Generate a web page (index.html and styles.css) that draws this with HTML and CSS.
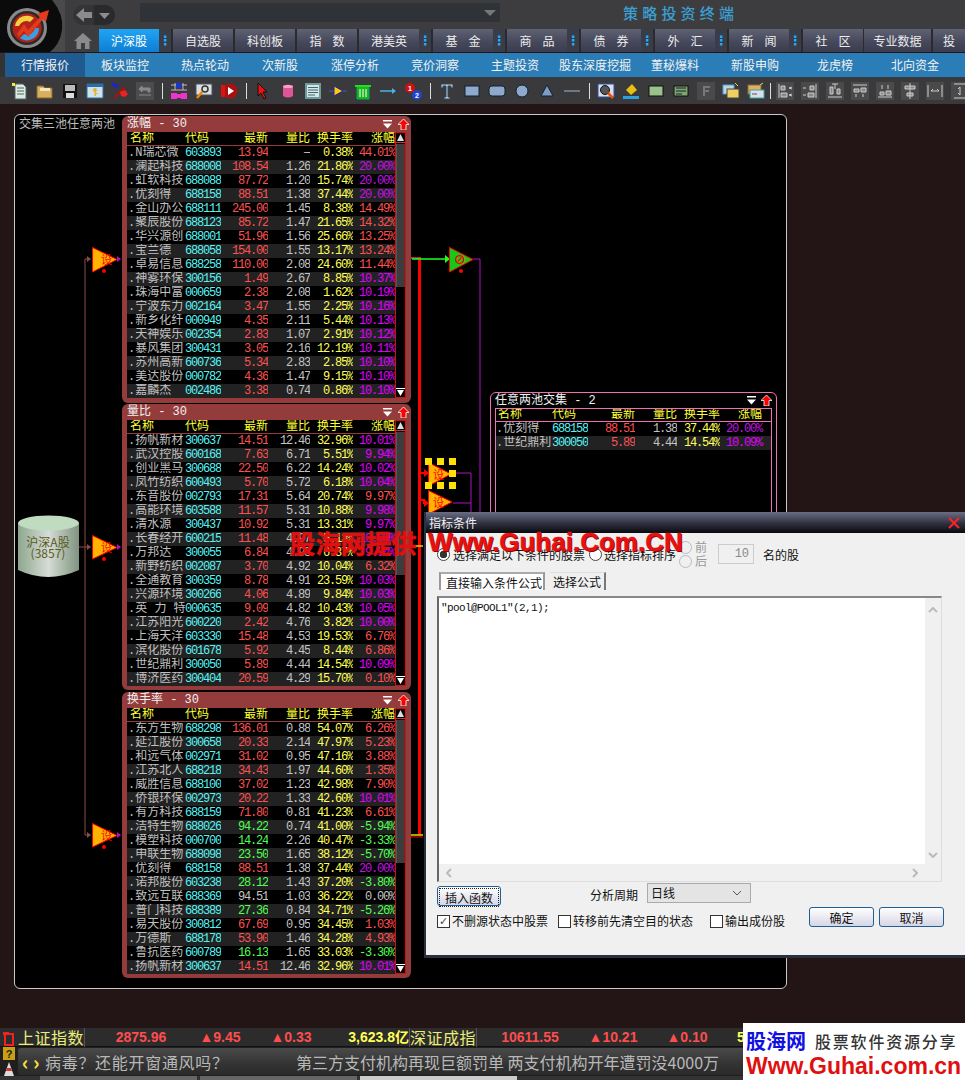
FILE: index.html
```html
<!DOCTYPE html>
<html lang="zh-CN">
<head>
<meta charset="utf-8">
<title>策略投资终端</title>
<link rel="stylesheet" href="styles.css">
</head>
<body>
<svg class="defs" width="0" height="0">
  <defs>
    <symbol id="arrowup" viewBox="0 0 11 11"><path d="M5.5 0 11 5.5H8V11H3V5.5H0Z" fill="#f00" stroke="#fff" stroke-width=".8"/></symbol>
    <symbol id="menu" viewBox="0 0 9 9"><path d="M0 0h9v1.5H0zM0 3.5h9L4.5 8.5z" fill="#fff"/></symbol>
    <symbol id="btnup" viewBox="0 0 9 10"><path d="M4.5 1 8 8H1z" fill="#ddd"/><path d="M0 9h9v1H0z" fill="#c33"/></symbol>
    <symbol id="btndn" viewBox="0 0 9 10"><path d="M0 1h9v1H0z" fill="#fff"/><path d="M1 3h7L4.5 9z" fill="#fff"/></symbol>
    <linearGradient id="cyl" x1="0" x2="1" y1="0" y2="0"><stop offset="0" stop-color="#8ea78f"/><stop offset=".5" stop-color="#d6dcd6"/><stop offset="1" stop-color="#7f937f"/></linearGradient>
  </defs>
</svg>

<header class="top">
  <svg class="logo" width="65" height="52" viewBox="0 0 65 52">
    <rect width="65" height="52" fill="#4a4a4c"/>
    <path d="M0 0H52Q64 14 62 30Q60 44 50 52H0Z" fill="#0b0b0b"/>
    <circle cx="27" cy="28" r="20" fill="#8a8a8a"/>
    <circle cx="27" cy="28" r="17" fill="#2a2a2a"/>
    <circle cx="27" cy="28" r="14.5" fill="#b52218"/>
    <path d="M15 26A12 12 0 0 1 34 18L30 22A8 8 0 0 0 19 26Z" fill="#f2d040"/>
    <path d="M39 28A12 12 0 0 1 20 38L24 34A8 8 0 0 0 35 28Z" fill="#3a9fe0"/>
    <path d="M17 34 24 24 28 30 40 17 37 14 49 10 46 22 43 19 28 37 24 31 19 37Z" fill="#e23a1c"/>
  </svg>
  <div class="top-right">
    <div class="top-row">
      <div class="backpill">
        <svg width="21" height="20" viewBox="0 0 21 20"><path d="M3 10 11 3V7H19V13H11V17Z" fill="#8c8c8c"/></svg>
        <svg class="pill-dn" width="21" height="20" viewBox="0 0 21 20"><path d="M5 8H16L10.500 14Z" fill="#8c8c8c"/></svg>
      </div>
      <div class="addr"><svg width="12" height="8" viewBox="0 0 12 8"><path d="M0 1H12L6 7Z" fill="#777"/></svg></div>
      <div class="apptitle">策略投资终端</div>
    </div>
    <nav class="tabs">
      <div class="home"><svg width="20" height="18" viewBox="0 0 20 18"><path d="M10 1 19 9H16.500V17H12V11H8V17H3.500V9H1Z" fill="#8a8a8a"/></svg></div>
      <div class="tab wide active"><span>沪深股</span><i>⋮</i></div>
      <div class="tab"><span>自选股</span></div>
      <div class="tab"><span>科创板</span></div>
      <div class="tab"><span class="sp">指数</span></div>
      <div class="tab wide"><span>港美英</span><i>⋮</i></div>
      <div class="tab wide"><span class="sp">基金</span><i>⋮</i></div>
      <div class="tab wide"><span class="sp">商品</span><i>⋮</i></div>
      <div class="tab wide"><span class="sp">债券</span><i>⋮</i></div>
      <div class="tab wide"><span class="sp">外汇</span><i>⋮</i></div>
      <div class="tab wide"><span class="sp">新闻</span><i>⋮</i></div>
      <div class="tab"><span class="sp">社区</span></div>
      <div class="tab pro"><span>专业数据</span></div>
      <div class="tab cut"><span>投</span></div>
    </nav>
  </div>
</header>

<nav class="subnav">
  <div class="sub on">行情报价</div><div class="sub">板块监控</div><div class="sub">热点轮动</div><div class="sub">次新股</div>
  <div class="sub">涨停分析</div><div class="sub">竞价洞察</div><div class="sub">主题投资</div><div class="sub">股东深度挖掘</div>
  <div class="sub">董秘爆料</div><div class="sub">新股申购</div><div class="sub">龙虎榜</div><div class="sub">北向资金</div>
</nav>

<div class="toolbar">
  <svg viewBox="0 0 18 18"><path d="M4 2h8l3 3v12H4z" fill="#dfe9e4" stroke="#4a6a5a"/><path d="M6 6h7M6 9h7M6 12h7" stroke="#4a6a5a"/><path d="M1 1h3v3H1z" fill="#ee3"/></svg>
  <svg viewBox="0 0 18 18"><path d="M1 4h6l2 2h7v10H1z" fill="#d9ae5c" stroke="#86662a"/><path d="M4 6h10v3H4z" fill="#efe6c8"/></svg>
  <svg viewBox="0 0 18 18"><path d="M2 2h14v14H2z" fill="#111"/><path d="M4 3h10v6H4z" fill="#bbb"/><path d="M5 11h8v5H5z" fill="#ddd"/></svg>
  <svg viewBox="0 0 18 18"><path d="M1 2h16v14H1z" fill="#cfe2ee" stroke="#2a6fa5"/><path d="M1 2h16v3H1z" fill="#2a6fa5"/><circle cx="9" cy="8" r="2" fill="#e3b530"/><path d="M8.500 9h1.500v5H8.500zM10 11h2v1h-2z" fill="#e3b530"/></svg>
  <svg viewBox="0 0 18 18"><path d="M1 3h6M1 1l5 5" stroke="#22c" stroke-width="2"/><path d="M3 16 14 5" stroke="#a11" stroke-width="2"/><path d="M9 10l5-2 3 4-3 3-4-1z" fill="#e22"/></svg>
  <svg viewBox="0 0 18 18"><rect width="18" height="18" fill="#4c4c4c"/><path d="M3 7 6 4V6H14V10H12V8H6V10ZM3 13H15" stroke="#888" fill="#888"/></svg>
  <b class="sep"></b>
  <svg viewBox="0 0 18 18"><path d="M1 3h16M1 8h16M5 1v7M13 1v7" stroke="#bbb"/><path d="M6 1h6v5H6z" fill="#23c"/><path d="M1 11h6v6H1zM11 11h6v6h-6z" fill="#e3c"/><path d="M7 12h4v4H7z" fill="#e3c"/></svg>
  <svg viewBox="0 0 18 18"><path d="M1 2h16v11H1z" fill="#ddd" stroke="#456"/><circle cx="10" cy="7" r="3" fill="none" stroke="#333" stroke-width="1.500"/><path d="M7.500 9.500 2 16" stroke="#e80" stroke-width="2.500"/></svg>
  <svg viewBox="0 0 18 18"><circle cx="10" cy="9" r="7.500" fill="#a11"/><path d="M8 5v8l6-4z" fill="#fff"/><path d="M1 3h4v12H1z" fill="#d11"/></svg>
  <b class="sep"></b>
  <svg viewBox="0 0 18 18"><path d="M4 1v13l3-3 3 6 2-1-3-6h4z" fill="#e11" stroke="#111"/></svg>
  <svg viewBox="0 0 18 18"><path d="M4 4q5-3 10 0v10q-5 3-10 0z" fill="#e0559a"/><ellipse cx="9" cy="4.500" rx="5" ry="1.500" fill="#f5a5cc"/></svg>
  <svg viewBox="0 0 18 18"><rect x="2" y="2" width="14" height="14" fill="#d6e6e6" stroke="#6a9a9a" stroke-width="2"/><path d="M4 5.500h10M4 8h10M4 10.500h10M4 13h7" stroke="#467"/></svg>
  <svg viewBox="0 0 18 18"><path d="M0 9h18" stroke="#45c"/><path d="M5 4 14 9 5 14z" fill="#fc0" stroke="#22a"/></svg>
  <svg viewBox="0 0 18 18"><path d="M3 4h12v13H3z" fill="#1ab61a" stroke="#0a5"/><path d="M1 3h16v2H1z" fill="#2d2"/><path d="M6 7v8M9 7v8M12 7v8" stroke="#fff"/></svg>
  <svg viewBox="0 0 18 18"><path d="M1 9h13" stroke="#4ab0e6" stroke-width="1.500"/><path d="M13 6l4 3-4 3z" fill="#4ab0e6"/></svg>
  <svg viewBox="0 0 18 18"><circle cx="6" cy="6" r="5" fill="#c11"/><circle cx="13" cy="13" r="5" fill="#24c"/><text x="6" y="9" class="tiny">1</text><text x="13" y="16" class="tiny">2</text></svg>
  <b class="sep"></b>
  <svg viewBox="0 0 18 18"><path d="M3 2h12v4h-2V4h-3v11h2v2H6v-2h2V4H5v2H3z" fill="#b7cfe6" stroke="#345"/></svg>
  <svg viewBox="0 0 18 18"><rect x="2" y="4" width="14" height="10" fill="#8fa9cc" stroke="#123"/></svg>
  <svg viewBox="0 0 18 18"><rect x="1" y="4" width="16" height="10" rx="3" fill="#8fa9cc" stroke="#123"/></svg>
  <svg viewBox="0 0 18 18"><circle cx="9" cy="9" r="6" fill="#8fa9cc" stroke="#123"/></svg>
  <svg viewBox="0 0 18 18"><path d="M9 3 15 14H3Z" fill="#7f9cc4" stroke="#123"/></svg>
  <svg viewBox="0 0 18 18"><path d="M1 9h16" stroke="#9bb7d4"/></svg>
  <b class="sep"></b>
  <svg viewBox="0 0 18 18"><path d="M1 2h16v13H1z" fill="#dde" stroke="#25a"/><circle cx="8" cy="8" r="4.500" fill="#555" stroke="#111"/><path d="M11 11l5 5" stroke="#e50" stroke-width="2.500"/></svg>
  <svg viewBox="0 0 18 18"><path d="M4 8 10 2l5 6-6 5z" fill="#e8c010"/><path d="M1 14h16v3H1z" fill="#2ea0e0"/></svg>
  <svg viewBox="0 0 18 18"><rect x="2" y="4" width="14" height="10" fill="#9ac28a" stroke="#111"/></svg>
  <svg viewBox="0 0 18 18"><rect x="2" y="4" width="14" height="10" fill="#7fa56f" stroke="#111"/><path d="M4 6h10M4 9h10M4 12h6" stroke="#123"/></svg>
  <svg viewBox="0 0 18 18"><rect width="18" height="18" fill="#4a4a4a"/><path d="M6 4h7v2H8v2h4v2H8v4H6z" fill="#777"/></svg>
  <svg viewBox="0 0 18 18"><rect x="1" y="3" width="11" height="9" fill="#bcd6e6" stroke="#59c"/><rect x="5" y="7" width="12" height="9" fill="#f0d060" stroke="#444"/><path d="M13 1l3 3" stroke="#fc3"/></svg>
  <svg viewBox="0 0 18 18"><rect x="1" y="3" width="13" height="9" fill="#e0b060" stroke="#864"/><rect x="3" y="8" width="14" height="8" fill="#dde" stroke="#3a9"/><path d="M13 3l3-2" stroke="#fc3"/><path d="M5 12h5" stroke="#555"/></svg>
  <b class="sep sep2"></b>
  <svg viewBox="0 0 18 18"><rect width="18" height="18" fill="#4a4a4a"/><path d="M3 2v14M5 4h4v4H5zM5 11h6v4H5zM13 6l3-1M13 6l3 1M13 13l3-1M13 13l3 1" stroke="#ccc" fill="#888"/></svg>
  <svg viewBox="0 0 18 18"><rect width="18" height="18" fill="#4a4a4a"/><path d="M15 2v14M9 4h4v4H9zM7 11h6v4H7zM2 6h3M2 13h3" stroke="#ccc" fill="#888"/></svg>
  <svg viewBox="0 0 18 18"><rect width="18" height="18" fill="#4a4a4a"/><path d="M2 15h14M4 5h3v7H4zM11 7h3v5h-3zM9 2v5M6 2h6" stroke="#ccc" fill="#888"/></svg>
  <svg viewBox="0 0 18 18"><rect width="18" height="18" fill="#4a4a4a"/><path d="M2 3h14M3 7h5v3H3zM10 6h5v4h-5zM5 12v3M12 12v3" stroke="#ccc" fill="#888"/></svg>
  <svg viewBox="0 0 18 18"><rect width="18" height="18" fill="#4a4a4a"/><path d="M2 15h14M4 10h4v3H4zM10 9h5v4h-5zM6 3v4M12 3v4" stroke="#ccc" fill="#888"/></svg>
  <svg viewBox="0 0 18 18"><rect width="18" height="18" fill="#4a4a4a"/><path d="M9 1v16M4 4h10v3H4zM6 11h6v3H6z" stroke="#ccc" fill="#888"/></svg>
  <svg viewBox="0 0 18 18"><rect width="18" height="18" fill="#4a4a4a"/><path d="M2 3v12M16 3v12M5 9h8M5 9l2-2M13 9l-2-2" stroke="#ccc"/></svg>
  <svg viewBox="0 0 18 18"><rect width="18" height="18" fill="#4a4a4a"/><path d="M3 2h12M3 16h12M9 5v8M9 5 7 7M9 13l-2-2" stroke="#ccc"/></svg>
</div>

<main class="main">
  <section class="canvas">
    <div class="canvas-title">交集三池任意两池</div>

    <svg class="wires" width="771" height="873" viewBox="15 115 771 873">
      <path d="M79 547H90M85 259V835M85 259H90M85 835H90" stroke="#8a4a4a" fill="none"/>
      <path d="M87 256l4 3-4 3zM87 544l4 3-4 3zM87 832l4 3-4 3z" fill="#8a4a4a"/>
      <path d="M117 256l4 3-4 3zM117 544l4 3-4 3zM117 832l4 3-4 3z" fill="#b010c0"/>
      <path d="M473 259H480V512M452 473H471V512M453 503H471" stroke="#b010c0" fill="none"/>
      <path d="M419.500 259V835" stroke="#f00" stroke-width="3"/>
      <path d="M411 258H421" stroke="#a33" stroke-width="2"/>
      <path d="M419 473H425M419 500H424V503H428" stroke="#f00" stroke-width="2" fill="none"/>
      <path d="M424 469l5 4-5 4zM424 499l5 4-5 4z" fill="#f00"/>
      <path d="M412 259H446" stroke="#2f2" stroke-width="1.500"/>
      <path d="M445 255l5 4-5 4z" fill="#2f2"/>
      <path d="M411 546H423M411 835H423" stroke="#d8e000" stroke-width="1.500"/>
      <path d="M411 837H423" stroke="#f00"/>

      <g class="node"><path d="M92.500 247.500 117 259.500 92.500 272Z"/><text x="101" y="264">设</text><circle cx="104" cy="271" r="2"/></g>
      <g class="node"><path d="M92.500 535.500 117 547.500 92.500 559Z"/><text x="101" y="552">设</text><circle cx="104" cy="559" r="2"/></g>
      <g class="node"><path d="M92.500 823.500 117 835.500 92.500 847Z"/><text x="101" y="840">设</text><circle cx="104" cy="847" r="2"/></g>
      <g class="node nodeg"><path d="M449.500 247.500 473 259.500 449.500 272Z"/><text x="454" y="264">⊘</text><circle cx="461" cy="271" r="2"/></g>
      <g class="node"><path d="M428.500 462.500 451 474 428.500 486Z"/><text x="433" y="479">设</text></g>
      <g class="node"><path d="M428.500 490.500 452 502 428.500 514Z"/><text x="433" y="507">设</text></g>
      <path fill="#ffe000" d="M425 458h7v7h-7zM437 458h7v7h-7zM449 458h7v7h-7zM449 470h7v7h-7zM425 482h7v7h-7zM437 482h7v7h-7zM449 482h7v7h-7z"/>

      <path d="M18 523V570Q48 584 79 570V523Z" fill="url(#cyl)"/>
      <ellipse cx="48.500" cy="523" rx="30.500" ry="7.500" fill="#c0dcc0"/>
      <text class="cyl-t" x="48" y="547">沪深A股</text>
      <text class="cyl-t" x="48" y="558">(3857)</text>
    </svg>

    <article class="panel p1">
      <div class="ptitle"><span>涨幅 - 30</span><svg class="ic"><use href="#menu"/></svg><svg class="ic2"><use href="#arrowup"/></svg></div>
      <div class="pbody">
        <table class="grid">
          <thead><tr><th>名称</th><th>代码</th><th>最新</th><th>量比</th><th>换手率</th><th>涨幅</th></tr></thead>
          <tbody>
            <tr><td>.N瑞芯微</td><td>603893</td><td class="u">13.94</td><td>—</td><td>0.38%</td><td class="u">44.01%</td></tr>
            <tr><td>.澜起科技</td><td>688008</td><td class="u">108.54</td><td>1.26</td><td>21.86%</td><td class="p">20.00%</td></tr>
            <tr><td>.虹软科技</td><td>688088</td><td class="u">87.72</td><td>1.20</td><td>15.74%</td><td class="p">20.00%</td></tr>
            <tr><td>.优刻得</td><td>688158</td><td class="u">88.51</td><td>1.38</td><td>37.44%</td><td class="p">20.00%</td></tr>
            <tr><td>.金山办公</td><td>688111</td><td class="u">245.00</td><td>1.45</td><td>8.38%</td><td class="u">14.49%</td></tr>
            <tr><td>.聚辰股份</td><td>688123</td><td class="u">85.72</td><td>1.47</td><td>21.65%</td><td class="u">14.32%</td></tr>
            <tr><td>.华兴源创</td><td>688001</td><td class="u">51.96</td><td>1.56</td><td>25.66%</td><td class="u">13.25%</td></tr>
            <tr><td>.宝兰德</td><td>688058</td><td class="u">154.00</td><td>1.55</td><td>13.17%</td><td class="u">13.24%</td></tr>
            <tr><td>.卓易信息</td><td>688258</td><td class="u">110.00</td><td>2.08</td><td>24.60%</td><td class="u">11.44%</td></tr>
            <tr><td>.神雾环保</td><td>300156</td><td class="u">1.49</td><td>2.67</td><td>8.85%</td><td class="m">10.37%</td></tr>
            <tr><td>.珠海中富</td><td>000659</td><td class="u">2.38</td><td>2.08</td><td>1.62%</td><td class="m">10.19%</td></tr>
            <tr><td>.宁波东力</td><td>002164</td><td class="u">3.47</td><td>1.55</td><td>2.25%</td><td class="m">10.16%</td></tr>
            <tr><td>.新乡化纤</td><td>000949</td><td class="u">4.35</td><td>2.11</td><td>5.44%</td><td class="m">10.13%</td></tr>
            <tr><td>.天神娱乐</td><td>002354</td><td class="u">2.83</td><td>1.07</td><td>2.91%</td><td class="m">10.12%</td></tr>
            <tr><td>.暴风集团</td><td>300431</td><td class="u">3.05</td><td>2.16</td><td>12.19%</td><td class="m">10.11%</td></tr>
            <tr><td>.苏州高新</td><td>600736</td><td class="u">5.34</td><td>2.83</td><td>2.85%</td><td class="m">10.10%</td></tr>
            <tr><td>.美达股份</td><td>000782</td><td class="u">4.36</td><td>1.47</td><td>9.15%</td><td class="m">10.10%</td></tr>
            <tr><td>.嘉麟杰</td><td>002486</td><td class="u">3.38</td><td>0.74</td><td>0.86%</td><td class="m">10.10%</td></tr>
          </tbody>
        </table>
        <div class="sb"><svg class="sbb"><use href="#btnup"/></svg><div class="thumb"></div><svg class="sbb"><use href="#btndn"/></svg></div>
      </div>
    </article>

    <article class="panel p2">
      <div class="ptitle"><span>量比 - 30</span><svg class="ic"><use href="#menu"/></svg><svg class="ic2"><use href="#arrowup"/></svg></div>
      <div class="pbody">
        <table class="grid">
          <thead><tr><th>名称</th><th>代码</th><th>最新</th><th>量比</th><th>换手率</th><th>涨幅</th></tr></thead>
          <tbody>
            <tr><td>.扬帆新材</td><td>300637</td><td class="u">14.51</td><td>12.46</td><td>32.96%</td><td class="m">10.01%</td></tr>
            <tr><td>.武汉控股</td><td>600168</td><td class="u">7.63</td><td>6.71</td><td>5.51%</td><td class="m">9.94%</td></tr>
            <tr><td>.创业黑马</td><td>300688</td><td class="u">22.50</td><td>6.22</td><td>14.24%</td><td class="m">10.02%</td></tr>
            <tr><td>.凤竹纺织</td><td>600493</td><td class="u">5.70</td><td>5.72</td><td>6.18%</td><td class="m">10.04%</td></tr>
            <tr><td>.东音股份</td><td>002793</td><td class="u">17.31</td><td>5.64</td><td>20.74%</td><td class="u">9.97%</td></tr>
            <tr><td>.高能环境</td><td>603588</td><td class="u">11.57</td><td>5.31</td><td>10.88%</td><td class="m">9.98%</td></tr>
            <tr><td>.清水源</td><td>300437</td><td class="u">10.92</td><td>5.31</td><td>13.31%</td><td class="m">9.97%</td></tr>
            <tr><td>.长春经开</td><td>600215</td><td class="u">11.48</td><td>4.97</td><td>5.13%</td><td class="m">10.00%</td></tr>
            <tr><td>.万邦达</td><td>300055</td><td class="u">6.84</td><td>4.93</td><td>6.37%</td><td class="m">9.94%</td></tr>
            <tr><td>.新野纺织</td><td>002087</td><td class="u">3.70</td><td>4.92</td><td>10.04%</td><td class="u">6.32%</td></tr>
            <tr><td>.全通教育</td><td>300359</td><td class="u">8.78</td><td>4.91</td><td>23.59%</td><td class="m">10.03%</td></tr>
            <tr><td>.兴源环境</td><td>300266</td><td class="u">4.06</td><td>4.89</td><td>9.84%</td><td class="m">10.03%</td></tr>
            <tr><td>.英 力 特</td><td>000635</td><td class="u">9.09</td><td>4.82</td><td>10.43%</td><td class="m">10.05%</td></tr>
            <tr><td>.江苏阳光</td><td>600220</td><td class="u">2.42</td><td>4.76</td><td>3.82%</td><td class="m">10.00%</td></tr>
            <tr><td>.上海天洋</td><td>603330</td><td class="u">15.48</td><td>4.53</td><td>19.53%</td><td class="u">6.76%</td></tr>
            <tr><td>.滨化股份</td><td>601678</td><td class="u">5.92</td><td>4.45</td><td>8.44%</td><td class="u">6.86%</td></tr>
            <tr><td>.世纪鼎利</td><td>300050</td><td class="u">5.89</td><td>4.44</td><td>14.54%</td><td class="m">10.09%</td></tr>
            <tr><td>.博济医药</td><td>300404</td><td class="u">20.59</td><td>4.29</td><td>15.70%</td><td class="u">0.10%</td></tr>
          </tbody>
        </table>
        <div class="sb"><svg class="sbb"><use href="#btnup"/></svg><div class="thumb"></div><svg class="sbb"><use href="#btndn"/></svg></div>
      </div>
    </article>

    <article class="panel p3">
      <div class="ptitle"><span>换手率 - 30</span><svg class="ic"><use href="#menu"/></svg><svg class="ic2"><use href="#arrowup"/></svg></div>
      <div class="pbody">
        <table class="grid">
          <thead><tr><th>名称</th><th>代码</th><th>最新</th><th>量比</th><th>换手率</th><th>涨幅</th></tr></thead>
          <tbody>
            <tr><td>.东方生物</td><td>688298</td><td class="u">136.01</td><td>0.88</td><td>54.07%</td><td class="u">6.26%</td></tr>
            <tr><td>.延江股份</td><td>300658</td><td class="u">20.33</td><td>2.14</td><td>47.97%</td><td class="u">5.23%</td></tr>
            <tr><td>.和远气体</td><td>002971</td><td class="u">31.02</td><td>0.95</td><td>47.16%</td><td class="u">3.88%</td></tr>
            <tr><td>.江苏北人</td><td>688218</td><td class="u">34.43</td><td>1.97</td><td>44.60%</td><td class="u">1.35%</td></tr>
            <tr><td>.威胜信息</td><td>688100</td><td class="u">37.02</td><td>1.23</td><td>42.98%</td><td class="u">7.90%</td></tr>
            <tr><td>.侨银环保</td><td>002973</td><td class="u">20.22</td><td>1.33</td><td>42.60%</td><td class="m">10.01%</td></tr>
            <tr><td>.有方科技</td><td>688159</td><td class="u">71.80</td><td>0.81</td><td>41.23%</td><td class="u">6.61%</td></tr>
            <tr><td>.洁特生物</td><td>688026</td><td class="d">94.22</td><td>0.74</td><td>41.00%</td><td class="d">-5.94%</td></tr>
            <tr><td>.模塑科技</td><td>000700</td><td class="d">14.24</td><td>2.26</td><td>40.47%</td><td class="d">-3.33%</td></tr>
            <tr><td>.申联生物</td><td>688098</td><td class="d">23.50</td><td>1.65</td><td>38.12%</td><td class="d">-5.70%</td></tr>
            <tr><td>.优刻得</td><td>688158</td><td class="u">88.51</td><td>1.38</td><td>37.44%</td><td class="p">20.00%</td></tr>
            <tr><td>.诺邦股份</td><td>603238</td><td class="d">28.12</td><td>1.43</td><td>37.20%</td><td class="d">-3.80%</td></tr>
            <tr><td>.致远互联</td><td>688369</td><td class="n">94.51</td><td>1.03</td><td>36.22%</td><td class="n">0.00%</td></tr>
            <tr><td>.普门科技</td><td>688389</td><td class="d">27.36</td><td>0.84</td><td>34.71%</td><td class="d">-5.26%</td></tr>
            <tr><td>.易天股份</td><td>300812</td><td class="u">67.69</td><td>0.95</td><td>34.45%</td><td class="u">1.03%</td></tr>
            <tr><td>.万德斯</td><td>688178</td><td class="u">53.90</td><td>1.46</td><td>34.28%</td><td class="u">4.93%</td></tr>
            <tr><td>.鲁抗医药</td><td>600789</td><td class="d">16.13</td><td>1.65</td><td>33.03%</td><td class="d">-3.30%</td></tr>
            <tr><td>.扬帆新材</td><td>300637</td><td class="u">14.51</td><td>12.46</td><td>32.96%</td><td class="m">10.01%</td></tr>
          </tbody>
        </table>
        <div class="sb"><svg class="sbb"><use href="#btnup"/></svg><div class="thumb"></div><svg class="sbb"><use href="#btndn"/></svg></div>
      </div>
    </article>

    <article class="panel p4">
      <div class="ptitle"><span>任意两池交集 - 2</span><svg class="ic"><use href="#menu"/></svg><svg class="ic2"><use href="#arrowup"/></svg></div>
      <div class="pbody4">
        <table class="grid grid4">
          <thead><tr><th>名称</th><th>代码</th><th>最新</th><th>量比</th><th>换手率</th><th>涨幅</th></tr></thead>
          <tbody>
            <tr><td>.优刻得</td><td>688158</td><td class="u">88.51</td><td>1.38</td><td>37.44%</td><td class="p">20.00%</td></tr>
            <tr><td>.世纪鼎利</td><td>300050</td><td class="u">5.89</td><td>4.44</td><td>14.54%</td><td class="m">10.09%</td></tr>
          </tbody>
        </table>
      </div>
    </article>
  </section>
</main>

<footer class="bottom">
  <div class="status">
    <div class="side"><svg width="14" height="16" viewBox="0 0 14 16"><path d="M3 4h8v11H3z" fill="none" stroke="#e22" stroke-width="2"/><path d="M1 2h6v3H1z" fill="#e22"/></svg></div>
    <div class="idx">上证指数</div><div class="v u2">2875.96</div><div class="v u2">▲9.45</div><div class="v u2">▲0.33</div><div class="v y2">3,623.8亿</div>
    <div class="idx idx2">深证成指</div><div class="v u2">10611.55</div><div class="v u2">▲10.21</div><div class="v u2">▲0.10</div><div class="v y2 last">5</div>
  </div>
  <div class="ticker">
    <div class="side side2">
      <svg width="12" height="13" viewBox="0 0 12 13"><rect width="12" height="13" fill="#c9a010"/><text x="6" y="11" class="q">?</text></svg>
      <svg width="12" height="14" viewBox="0 0 12 14"><path d="M6 0 11 14H1Z" fill="#ddd"/><path d="M4 6h4l1 3H3z" fill="#c33"/></svg>
    </div>
    <div class="marquee"><i class="angle">‹ ›</i><span class="news1">病毒？还能开窗通风吗？</span><span class="news2">第三方支付机构再现巨额罚单 两支付机构开年遭罚没4000万</span></div>
  </div>
  <div class="taskstrip"><i></i><i></i><i class="lit"></i></div>
</footer>

<aside class="wm1">股海网提供</aside>

<section class="dialog">
  <div class="dtitle"><span>指标条件</span><svg width="12" height="12" viewBox="0 0 12 12"><path d="M1 1 11 11M11 1 1 11" stroke="#f22" stroke-width="2"/></svg></div>
  <div class="dbody">
    <div class="radios">
      <label class="radio on"></label><span class="t1">选择满足以下条件的股票</span>
      <label class="radio"></label><span class="t2">选择指标排序</span>
      <div class="radiostack"><label class="radio off"></label><label class="radio off"></label></div>
      <div class="qianhou"><span>前</span><span>后</span></div>
      <div class="numbox">10</div>
      <span>名的股</span>
    </div>
    <div class="dtabs"><div class="dtab cur">直接输入条件公式</div><div class="dtab">选择公式</div></div>
    <div class="editor">
      <div class="edrow">
        <div class="edtext">"pool@POOL1"(2,1);</div>
        <div class="vbar"><svg width="10" height="6" viewBox="0 0 10 6"><path d="M1 5 5 1 9 5" fill="none" stroke="#bbb" stroke-width="2"/></svg><svg width="10" height="6" viewBox="0 0 10 6"><path d="M1 1 5 5 9 1" fill="none" stroke="#bbb" stroke-width="2"/></svg></div>
      </div>
      <div class="hbar"><svg width="6" height="10" viewBox="0 0 6 10"><path d="M5 1 1 5 5 9" fill="none" stroke="#bbb" stroke-width="2"/></svg><svg width="6" height="10" viewBox="0 0 6 10"><path d="M1 1 5 5 1 9" fill="none" stroke="#bbb" stroke-width="2"/></svg></div>
    </div>
    <div class="actions">
      <div class="col-l">
        <div class="row-fn">
          <button class="btn fn" type="button"><span>插入函数</span></button>
          <span class="period">分析周期</span>
          <div class="select">日线<svg width="10" height="6" viewBox="0 0 10 6"><path d="M1 1 5 5 9 1" fill="none" stroke="#555"/></svg></div>
        </div>
        <div class="checks">
          <span class="chk c1"><b class="box on">✓</b>不删源状态中股票</span>
          <span class="chk c2"><b class="box"></b>转移前先清空目的状态</span>
          <span class="chk"><b class="box"></b>输出成份股</span>
        </div>
      </div>
      <div class="col-r">
        <button class="btn" type="button">确定</button>
        <button class="btn" type="button">取消</button>
      </div>
    </div>
  </div>
</section>
<aside class="wm2">Www.Guhai.Com.CN</aside>

<aside class="brand">
  <div class="brand-top"><b>股海网</b><span>股票软件资源分享</span></div>
  <div class="brand-url">Www.Guhai.com.cn</div>
</aside>
</body>
</html>
```

FILE: styles.css
```css
* { box-sizing: border-box; }
html, body { margin: 0; padding: 0; }
body {
  width: 965px;
  height: 1080px;
  overflow: hidden;
  background: #231515;
  font-family: "Noto Sans CJK SC", sans-serif;
  font-size: 12px;
  display: flex;
  flex-direction: column;
}
.defs { position: absolute; }

/* header */
.top { display: flex; height: 52px; background: #3d3d3f; flex: none; }
.logo { flex: none; display: block; }
.top-right { flex: 1; display: flex; flex-direction: column; min-width: 0; }
.top-row { height: 29px; display: flex; align-items: flex-start; position: relative; }
.backpill { margin: 5px 0 0 8px; width: 42px; height: 20px; display: flex; background: #343436; border-radius: 10px; overflow: hidden; }
.pill-dn { background: #2a2a2c; }
.addr { margin: 3px 0 0 25px; width: 360px; height: 19px; background: #2f3236; display: flex; align-items: center; justify-content: flex-end; padding-right: 4px; }
.apptitle { margin: 3px 0 0 123px; color: #3b9fd2; font-size: 15px; font-weight: 500; line-height: 20px; letter-spacing: 4.2px; white-space: nowrap; }
.tabs { height: 23px; display: flex; gap: 2px; align-items: stretch; background: #2b2b2d; }
.home { width: 34px; margin-right: -2px; background: #3d3d3f; display: flex; align-items: center; justify-content: center; padding-left: 2px; }
.tab { width: 60px; flex: none; background: linear-gradient(#5f6272, #44465a 60%, #3c3e4e); color: #ececec; display: flex; align-items: center; line-height: 23px; }
.tab span { flex: 1; text-align: center; white-space: nowrap; }
.tab i { width: 12px; font-style: normal; font-weight: bold; text-align: center; color: #19b4ff; font-family: "DejaVu Sans", sans-serif; font-size: 13px; background: #3a3c48; height: 23px; }
.tab.wide { width: 72px; }
.tab .sp { letter-spacing: 11px; padding-left: 11px; }
.tab.active span { background: linear-gradient(#20a4f4, #0e7ed2); height: 23px; color: #fff; }
.tab.pro { width: 67px; margin-left: -1px; }
.tab.cut { flex: 1; width: auto; }

.subnav { margin-top: 1px; height: 24px; padding-left: 5px; display: grid; grid-template-columns: 80px 80px 80px 70px repeat(8, 80px) 1fr; background: #2a7db6; box-shadow: inset 5px 0 0 #333; flex: none; }
.sub { color: #f2f2f2; text-align: center; line-height: 24px; white-space: nowrap; }
.sub.on { background: #1f5a90; }

.toolbar { height: 27px; flex: none; background: #3a3a3c; display: flex; align-items: center; padding-left: 11px; gap: 7px; overflow: hidden; }
.toolbar svg { width: 18px; height: 18px; flex: none; }
.toolbar .tiny { font: bold 7px "Liberation Sans", sans-serif; fill: #fff; text-anchor: middle; }
.sep { width: 1px; height: 16px; background: #ddd; flex: none; margin: 0 0.5px; }
.sep2 { margin: 0 -2px; }

/* main */
.main { flex: 1; min-height: 0; padding: 10px 0 0 14px; }
.canvas { width: 773px; height: 875px; position: relative; background: #000; border: 1px solid #c8c8c8; border-radius: 6px; }
.canvas-title { position: absolute; left: 4px; top: 0; color: #bcbcbc; line-height: 16px; }
.wires { position: absolute; left: 0; top: 0; }
.node path { fill: #ffb400; stroke: #f00; }
.node text { font: 11px "Noto Sans CJK SC", sans-serif; fill: #f00; }
.node circle { fill: #f00; }
.nodeg path { fill: #18c818; stroke: #f00; }
.nodeg text { font: bold 14px "DejaVu Sans", sans-serif; }
.cyl-t { font: 12px "Noto Sans CJK SC", sans-serif; fill: #5a5a20; text-anchor: middle; }

.panel { position: absolute; left: 107px; width: 289px; background: #943c3c; border-radius: 6px; padding: 0 5px 5px; }
.p1 { top: 1px; }
.p2 { top: 289px; height: 286px; padding-bottom: 4px; }
.p3 { top: 577px; height: 286px; }
.ptitle { height: 16px; display: flex; align-items: center; color: #f0f0f0; line-height: 16px; font-family: "Liberation Mono", "Noto Sans CJK SC", monospace; position: relative; }
.ptitle span { flex: 1; white-space: pre; }
.ic { width: 9px; height: 9px; margin-right: 6px; flex: none; }
.ic2 { width: 11px; height: 11px; margin-right: -3px; flex: none; }
.pbody { display: flex; height: 266px; }
.grid { width: 268px; height: 266px; table-layout: fixed; border-spacing: 0; background: #000; font-family: "Liberation Mono", "Noto Sans CJK SC", monospace; font-size: 12px; flex: none; }
.grid th, .grid td { padding: 0; white-space: nowrap; overflow: hidden; text-align: right; }
.grid th { height: 14px; padding-top: 1px; color: #ffff33; font-weight: normal; font-size: 12px; line-height: 12px; border-bottom: 1px solid #943c3c; }
.grid td { height: 14px; line-height: 14px; letter-spacing: -1.2px; color: #c4c4c4; }
.grid tbody tr:nth-child(even) td { background: #222; }
.grid th:nth-child(1) { width: 58px; text-align: left; padding-left: 3px; }
.grid th:nth-child(2) { width: 36px; text-align: left; }
.grid th:nth-child(3) { width: 47px; }
.grid th:nth-child(4) { width: 42px; }
.grid th:nth-child(5) { width: 43px; }
.grid th:nth-child(6) { width: 42px; }
.grid td:nth-child(1) { text-align: left; padding-left: 1px; font-size: 12px; letter-spacing: 0; color: #c0c0c0; }
.grid td:nth-child(2) { text-align: left; color: #55f4f4; }
.grid td:nth-child(5) { color: #ffff55; }
.grid td.u { color: #ff5050; }
.grid td.d { color: #50ff50; }
.grid td.m { color: #e000ff; }
.grid td.p { color: #c412e0; }
.grid td.n { color: #c4c4c4; }

.sb { width: 11px; flex: none; background: #000; border: 1px solid #d01010; display: flex; flex-direction: column; }
.sbb { width: 9px; height: 10px; flex: none; }
.thumb { width: 9px; height: 143px; background: #3c3c3c; margin: 1px 0; box-shadow: inset 1px 0 #555; }
.sb .thumb + .sbb { margin-top: auto; }

.p4 { left: 475px; top: 277px; width: 287px; height: 160px; background: #000; border: 1px solid #f070b8; padding: 0 4px; }
.p4 .ptitle { color: #f0f0f0; height: 15px; }
.p4 .ic { margin-right: 5px; }
.p4 .ic2 { margin-right: 0; }
.pbody4 { border: 1px solid #f070b8; height: 140px; }
.grid4 { width: 100%; height: auto; }
.grid.grid4 th { height: 13px; padding-top: 0; border-bottom-color: #f070b8; }
.grid.grid4 th:nth-child(1) { width: 56px; padding-left: 2px; }
.grid.grid4 th:nth-child(6) { width: 51px; padding-right: 9px; }
.grid.grid4 td:nth-child(6) { padding-right: 9px; }
.grid.grid4 td:nth-child(1) { padding-left: 0; }

/* bottom */
.bottom { flex: none; height: 52px; background: #303030; }
.status { height: 19px; display: grid; grid-template-columns: 18px 67px 112px 46px 96px 70px 68px 106px 60px 88px 1fr; background: #2c2c2c; border-bottom: 1px solid #111; }
.side { display: flex; flex-direction: column; align-items: center; justify-content: center; gap: 2px; }
.idx { color: #ecec78; font-size: 16px; line-height: 19px; white-space: nowrap; border-right: 1px solid #555; letter-spacing: .5px; }
.idx2 { border-left: 1px solid #555; }
.v { text-align: center; font: bold 14px/19px "Liberation Sans", "Noto Sans CJK SC", sans-serif; white-space: nowrap; }
.u2 { color: #ff4d4d; }
.y2 { color: #ffff55; text-align: right; }
.last { text-align: left; padding-left: 6px; }
.ticker { height: 29px; display: flex; background: #1f1f1f; }
.side2 { width: 18px; flex: none; }
.q { font: bold 11px "Liberation Sans", sans-serif; fill: #222; text-anchor: middle; }
.marquee { flex: 1; margin: 1px 0; background: linear-gradient(#4a4a4a, #333 60%, #2a2a2a); border-radius: 3px 0 0 3px; display: flex; align-items: center; color: #b8b8b8; font-size: 16px; white-space: nowrap; padding-left: 4px; overflow: hidden; }
.angle { color: #ffe040; font-style: normal; font-weight: bold; font-size: 20px; line-height: 20px; width: 23px; flex: none; }
.news1 { width: 251px; flex: none; letter-spacing: .7px; }
.taskstrip { height: 4px; background: #333; display: flex; gap: 3px; padding-left: 40px; }
.taskstrip i { width: 157px; background: #666; }
.taskstrip .lit { background: #ccc; }

/* overlays */
.wm1 { position: absolute; left: 290px; top: 525px; color: #e01010; font-size: 25px; font-weight: 700; line-height: 34px; letter-spacing: .4px; white-space: nowrap; -webkit-text-stroke: .7px #e01010; }
.wm2 { position: absolute; left: 428px; top: 527px; color: #e81010; font: bold 26px/30px "Liberation Sans", sans-serif; text-shadow: 1px 1px 0 #7a0000; white-space: nowrap; -webkit-text-stroke: .4px #e81010; }

.dialog { position: absolute; left: 424px; top: 512px; width: 541px; height: 446px; background: #f0f0f0; border: 2px solid #2b3040; border-width: 0 0 3px 2px; display: flex; flex-direction: column; }
.dtitle { height: 21px; flex: none; background: linear-gradient(#6a6e84, #2e3040 55%, #0a0a0e); color: #f2f2f2; line-height: 21px; display: flex; justify-content: space-between; align-items: center; padding: 0 5px 0 3px; }
.dbody { flex: 1; padding: 0 23px 0 11px; display: flex; flex-direction: column; color: #111; }
.radios { height: 39px; display: flex; align-items: center; padding-top: 3px; }
.radio { width: 13px; height: 13px; border: 1.5px solid #444; border-radius: 50%; background: #fff; flex: none; display: block; }
.radio.on { background: radial-gradient(circle, #333 0 3.500px, #fff 4px); }
.radio.off { border-color: #bbb; background: #f0f0f0; }
.t1 { margin: 0 4px 0 3px; white-space: nowrap; }
.t2 { margin: 0 3px 0 2px; white-space: nowrap; }
.radiostack { display: flex; flex-direction: column; gap: 1px; }
.qianhou { display: flex; flex-direction: column; color: #999; line-height: 14px; margin: 0 11px 0 3px; }
.numbox { width: 36px; height: 20px; border: 1px solid #ccc; color: #888; text-align: right; padding-right: 4px; line-height: 18px; margin-right: 9px; font-family: "Liberation Mono", monospace; background: #f0f0f0; }
.dtabs { height: 18px; display: flex; gap: 5px; margin: 0 0 6px 2px; flex: none; }
.dtab { padding: 0 3px; line-height: 18px; border-right: 2px solid #777; border-top: 1px solid #ddd; }
.dtab.cur { width: 106px; padding: 0 5px; background: #fff; border: 1px solid #999; border-width: 2px 2px 0 2px; border-color: #aaa #999 transparent #999; line-height: 17px; white-space: nowrap; }
.editor { height: 286px; flex: none; border: 1px solid #ddd; border-left: 2px solid #666; border-top: 2px solid #888; display: flex; flex-direction: column; }
.edrow { flex: 1; display: flex; min-height: 0; }
.edtext { flex: 1; background: #fff; padding: 2px 2px; font: 11px/16px "Liberation Mono", monospace; letter-spacing: -0.6px; }
.vbar { width: 16px; flex: none; display: flex; flex-direction: column; justify-content: space-between; align-items: center; padding: 9px 0 6px; }
.hbar { height: 17px; flex: none; display: flex; justify-content: space-between; align-items: center; padding: 0 23px 0 7px; }
.actions { flex: 1; display: flex; align-items: flex-start; }
.col-l { flex: 1; min-width: 0; }
.row-fn { display: flex; align-items: flex-start; height: 27px; }
.btn { font: 12px "Noto Sans CJK SC", sans-serif; color: #111; height: 20px; width: 65px; padding: 0; border: 1px solid #1f5f96; border-radius: 3px; background: linear-gradient(#fff, #d6d6e6); line-height: 17px; }
.btn.fn { margin-top: 4px; width: 64px; }
.btn.fn span { display: block; margin: 1px; border: 1px dotted #222; }
.period { margin: 3px 9px 0 89px; line-height: 20px; white-space: nowrap; }
.select { margin-top: 1px; width: 104px; height: 20px; border: 1px solid #aaa; background: #e4e4e4; line-height: 18px; padding: 0 8px 0 3px; display: flex; align-items: center; justify-content: space-between; }
.checks { display: flex; margin-top: 5px; }
.chk { display: flex; align-items: center; line-height: 14px; white-space: nowrap; color: #111; }
.c1 { margin-right: 10px; }
.c2 { margin-right: 17px; }
.box { width: 13px; height: 13px; border: 1px solid #333; background: #fff; margin-right: 2px; font: 11px/11px "DejaVu Sans", sans-serif; color: #444; text-align: center; flex: none; display: block; }
.col-r { display: flex; gap: 5px; margin: 25px -2px 0 0; }

.brand { position: absolute; left: 743px; top: 1023px; width: 222px; height: 57px; background: #fff; padding: 5px 0 0 3px; }
.brand-top { display: flex; align-items: center; height: 26px; }
.brand-top b { color: #1010e0; font-size: 20px; width: 69px; flex: none; line-height: 26px; }
.brand-top span { color: #333; font-size: 16px; letter-spacing: 1.8px; font-weight: 500; white-space: nowrap; }
.brand-url { color: #e01010; font: bold 23px/24px "Liberation Sans", sans-serif; white-space: nowrap; }
```
